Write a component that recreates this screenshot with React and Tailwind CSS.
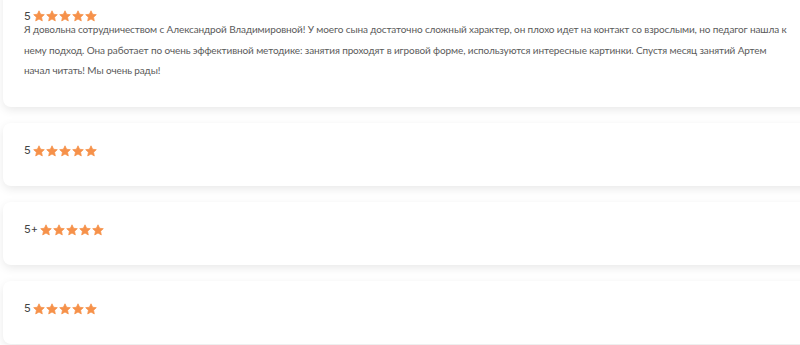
import React from 'react';

const reviews = [
  {
    grade: '5',
    text: 'Я довольна сотрудничеством с Александрой Владимировной! У моего сына достаточно сложный характер, он плохо идет на контакт со взрослыми, но педагог нашла к нему подход. Она работает по очень эффективной методике: занятия проходят в игровой форме, используются интересные картинки. Спустя месяц занятий Артем начал читать! Мы очень рады!'
  },
  { grade: '5', text: '' },
  { grade: '5+', text: '' },
  { grade: '5', text: '' }
];

const Star = () => (
  <svg width="12" height="12" viewBox="0 0 24 24" className="shrink-0">
    <path
      d="M12 1.6l3.2 6.9 7.4.8-5.5 5.1 1.5 7.4L12 18l-6.6 3.8 1.5-7.4-5.5-5.1 7.4-.8z"
      fill="#f6914a"
      stroke="#f6914a"
      strokeWidth="1.5"
      strokeLinejoin="round"
    />
  </svg>
);

const ReviewCard = ({ grade, text }) => (
  <div className="w-[830px] bg-white rounded-[8px] shadow-[0_3px_10px_rgba(0,0,0,0.09)] px-[21px] pt-[21px] pb-[26px]">
    <div className="flex items-center h-[14px] gap-[1px]">
      <span className="text-[11px] text-[#444] mr-[1px]" style={{ fontFamily: 'Inter, sans-serif' }}>{grade}</span>
      <div className="flex gap-[1px]">
        {[0, 1, 2, 3, 4].map(i => (
          <Star key={i} />
        ))}
      </div>
    </div>
    <p className="-mt-[4px] min-h-[6px] w-[764px] text-[10px] tracking-[-0.12px] leading-[20.5px] text-[#5a5a5a]">{text}</p>
  </div>
);

const App = () => {
  return (
    <div
      className="w-[800px] h-[345px] overflow-hidden bg-white"
      style={{ fontFamily: 'Lato, "Noto Sans", sans-serif' }}
    >
      <div className="-mt-[12px] pl-[3px] flex flex-col gap-[16px]">
        {reviews.map((r, i) => (
          <ReviewCard key={i} grade={r.grade} text={r.text} />
        ))}
      </div>
    </div>
  );
};

export default App;
